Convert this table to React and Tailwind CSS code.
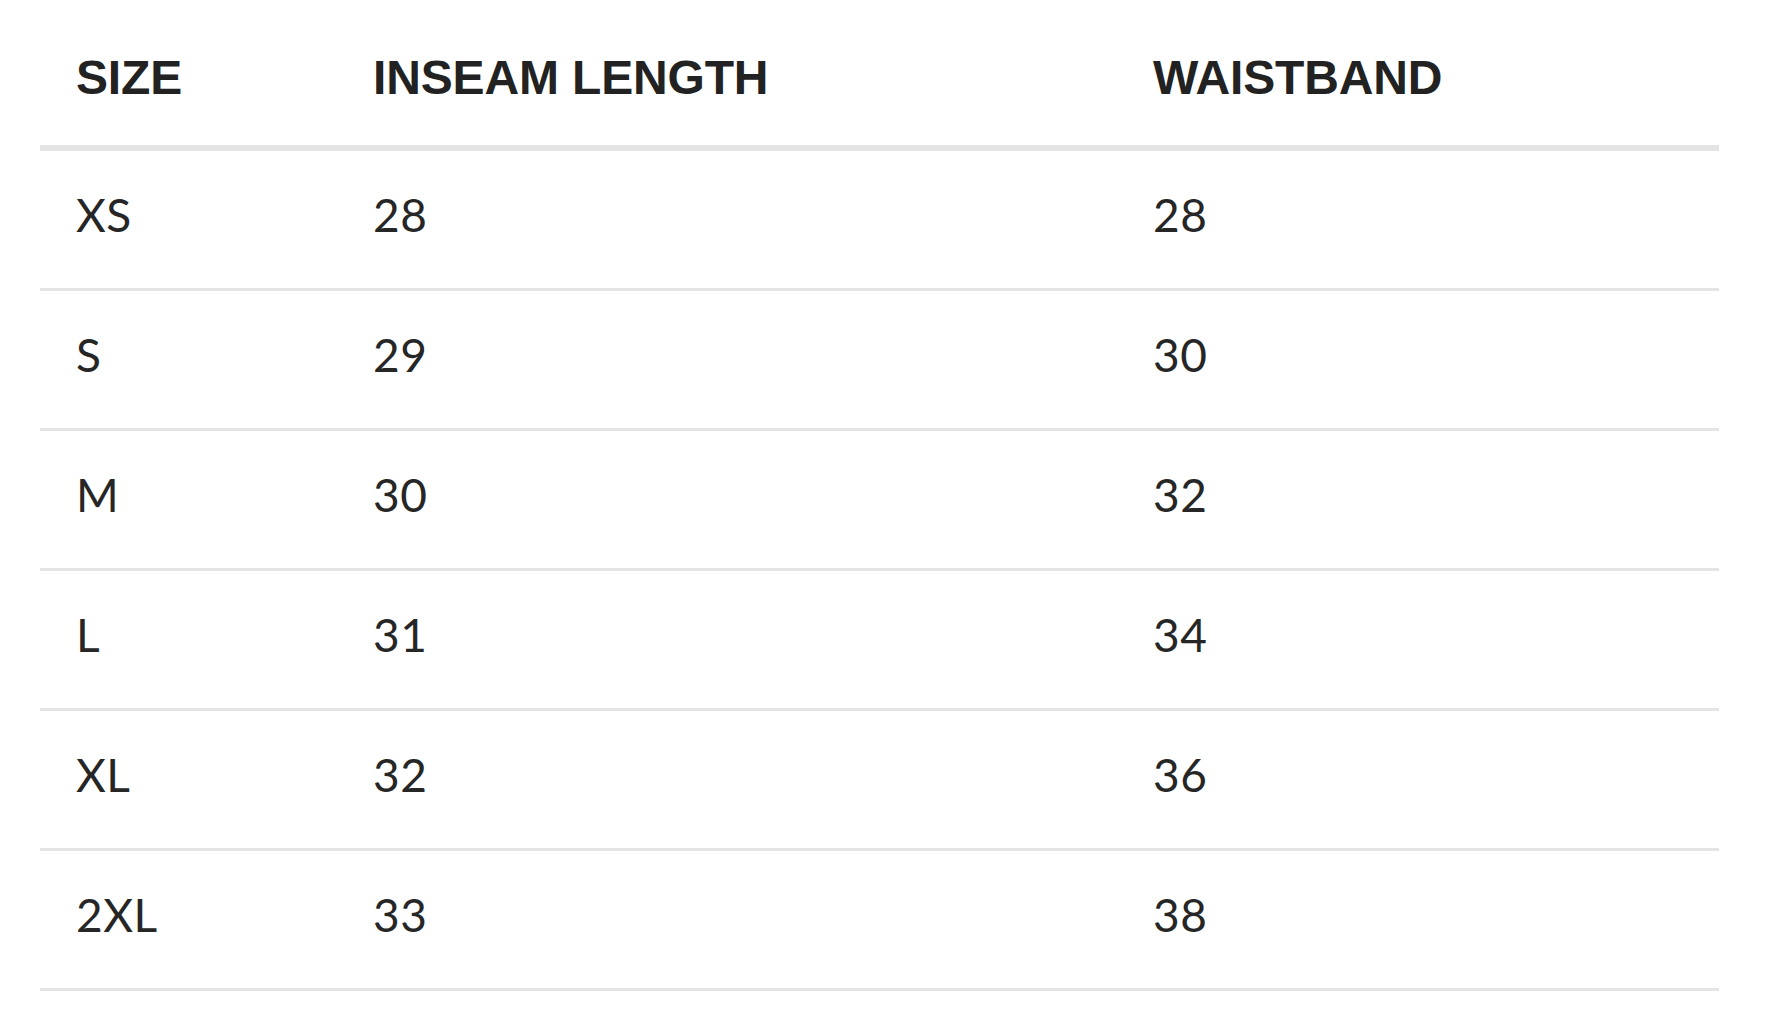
import React from 'react';

const rows = [
    ['XS', '28', '28'],
    ['S', '29', '30'],
    ['M', '30', '32'],
    ['L', '31', '34'],
    ['XL', '32', '36'],
    ['2XL', '33', '38'],
];

const cols = 'grid grid-cols-[297px_780px_1fr]';

const App = () => {
    return (
        <div className="min-h-[1030px] w-full bg-white">
            <div className="ml-[40px] w-[1679px]">
                {/* header */}
                <div className={`${cols} h-[151px] border-b-[6px] border-[#e4e4e4] pt-[51px] font-['Liberation_Sans',Arial,sans-serif] text-[48px] font-bold leading-[54px] tracking-[-0.15px] text-[#222]`}>
                    <div className="pl-[36px]">SIZE</div>
                    <div className="pl-[36px]">INSEAM LENGTH</div>
                    <div className="pl-[36px]">WAISTBAND</div>
                </div>

                {rows.map((r) => (
                    <div
                        key={r[0]}
                        className={`${cols} h-[140px] border-b-[3px] border-[#e4e4e4] pt-[37px] font-['Lato',sans-serif] text-[46px] font-normal leading-[54px] tracking-[0.5px] text-[#262626]`}
                    >
                        <div className="pl-[36px]">{r[0]}</div>
                        <div className="pl-[36px]">{r[1]}</div>
                        <div className="pl-[36px]">{r[2]}</div>
                    </div>
                ))}
            </div>
        </div>
    );
};

export default App;
